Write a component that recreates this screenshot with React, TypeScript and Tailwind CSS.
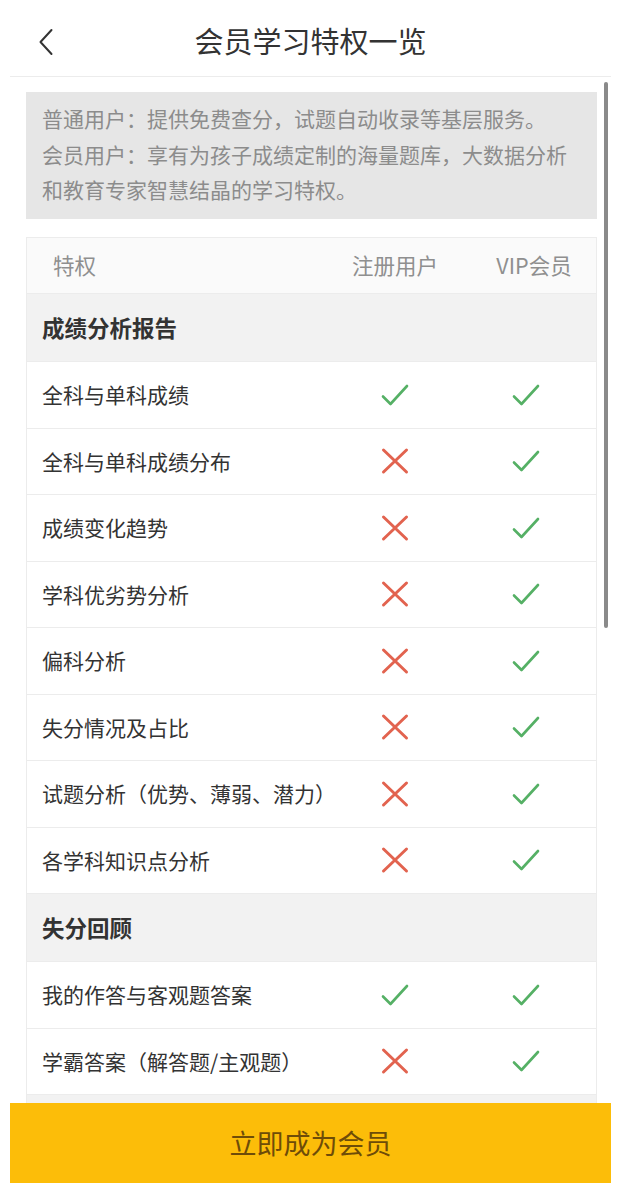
type Row = { name: string; reg: boolean; vip: boolean };

type Section = { title: string; rows: Row[] };

const sections: Section[] = [
  {
    title: "成绩分析报告",
    rows: [
      { name: "全科与单科成绩", reg: true, vip: true },
      { name: "全科与单科成绩分布", reg: false, vip: true },
      { name: "成绩变化趋势", reg: false, vip: true },
      { name: "学科优劣势分析", reg: false, vip: true },
      { name: "偏科分析", reg: false, vip: true },
      { name: "失分情况及占比", reg: false, vip: true },
      { name: "试题分析（优势、薄弱、潜力）", reg: false, vip: true },
      { name: "各学科知识点分析", reg: false, vip: true },
    ],
  },
  {
    title: "失分回顾",
    rows: [
      { name: "我的作答与客观题答案", reg: true, vip: true },
      { name: "学霸答案（解答题/主观题）", reg: false, vip: true },
    ],
  },
];

const Check = () => (
  <svg width="30" height="26" viewBox="0 0 30 26" fill="none">
    <path
      d="M3 14.5 L10.5 22 L27 4"
      stroke="#55b065"
      strokeWidth="2.6"
      strokeLinecap="round"
      strokeLinejoin="round"
    />
  </svg>
);

const Cross = () => (
  <svg width="30" height="28" viewBox="0 0 30 28" fill="none">
    <path
      d="M3.5 3 L26.5 25 M26.5 3 L3.5 25"
      stroke="#e2634f"
      strokeWidth="3"
      strokeLinecap="round"
    />
  </svg>
);

const App = () => {
  return (
    <div className="relative flex h-[1197px] w-[621px] flex-col overflow-hidden bg-white font-['Noto_Sans_CJK_SC',sans-serif]">
      {/* header */}
      <div className="mx-[10px] grid h-[77px] shrink-0 grid-cols-[1fr_auto_1fr] items-center border-b border-[#ececec]">
        <div className="pl-[29px] pt-[8px]">
          <svg width="14" height="28" viewBox="0 0 14 28" fill="none">
            <path
              d="M12.5 2 L1.5 14 L12.5 26"
              stroke="#333333"
              strokeWidth="2"
              strokeLinecap="round"
              strokeLinejoin="round"
            />
          </svg>
        </div>
        <div className="pt-[4px] text-[29px] leading-none text-[#333333]">会员学习特权一览</div>
        <div />
      </div>

      {/* scrollbar */}
      <div className="absolute left-[604px] top-[82px] h-[546px] w-[4px] rounded-full bg-[#8a8a8a]" />

      <div className="flex-1 overflow-hidden pl-[26px] pr-[24px] pt-[15px]">
        <div className="h-[127px] bg-[#e6e6e6] px-[16px] pt-[9px] text-[21px] leading-[35.5px] text-[#8c8c8c]">
          <div>普通用户：提供免费查分，试题自动收录等基层服务。</div>
          <div>会员用户：享有为孩子成绩定制的海量题库，大数据分析</div>
          <div>和教育专家智慧结晶的学习特权。</div>
        </div>

        <div className="mt-[18px] border border-[#ececec]">
          <div className="flex h-[56px] items-center border-b border-[#ececec] bg-[#fafafa] text-[21.5px] text-[#8f8f8f]">
            <div className="flex-1 pl-[26px]">特权</div>
            <div className="w-[122px] text-center">注册用户</div>
            <div className="w-[140px] pl-[16px] text-center">VIP会员</div>
          </div>
          {sections.map((section) => (
            <div key={section.title}>
              <div className="flex h-[68px] items-center border-b border-[#ececec] bg-[#f2f2f2] pl-[15px] text-[22.5px] font-bold text-[#333333]">
                {section.title}
              </div>
              {section.rows.map((row) => (
                <div
                  key={row.name}
                  className="flex h-[66.5px] items-center border-b border-[#ececec] bg-white text-[21px] text-[#333333]"
                >
                  <div className="flex-1 pl-[15px]">{row.name}</div>
                  <div className="flex w-[122px] justify-center">
                    {row.reg ? <Check /> : <Cross />}
                  </div>
                  <div className="flex w-[140px] justify-center">
                    {row.vip ? <Check /> : <Cross />}
                  </div>
                </div>
              ))}
            </div>
          ))}
          {/* next section, hidden under the button */}
          <div className="h-[68px] bg-[#f2f2f2]" />
        </div>
      </div>

      <div className="shrink-0 px-[10px] pb-[14px]">
        <div className="flex h-[80px] items-center justify-center bg-[#fcbd09] text-[27px] text-[#6e4c08]">
          立即成为会员
        </div>
      </div>
    </div>
  );
};

export default App;
